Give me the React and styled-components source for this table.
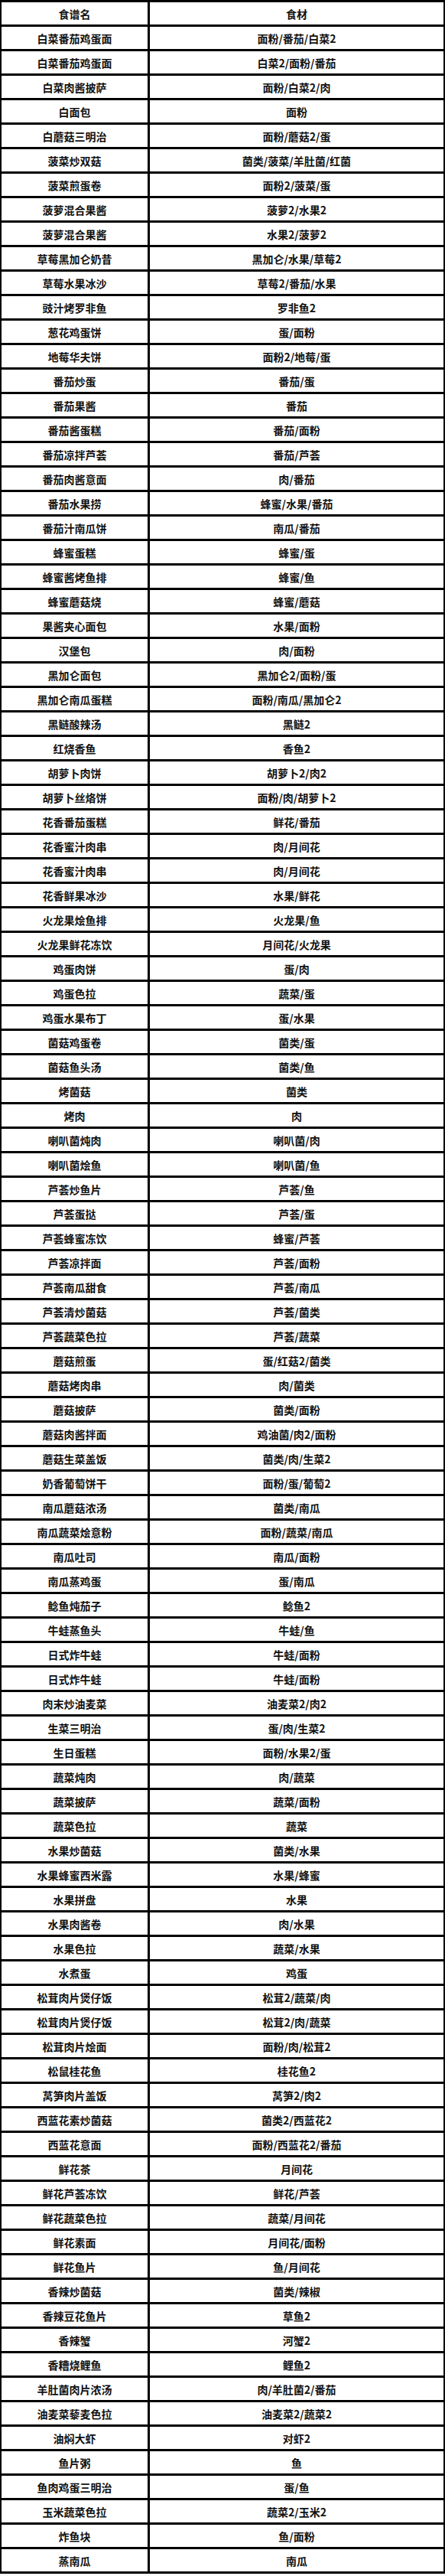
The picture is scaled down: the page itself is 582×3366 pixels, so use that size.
import React from "react";
import styled, { createGlobalStyle } from "styled-components";

const Global = createGlobalStyle`
  html, body { margin: 0; padding: 0; background: #ffffff; }
  body { font-family: "Noto Sans CJK SC", "Microsoft YaHei", sans-serif; }
`;

const rows = [
  ["白菜番茄鸡蛋面", "面粉/番茄/白菜2"],
  ["白菜番茄鸡蛋面", "白菜2/面粉/番茄"],
  ["白菜肉酱披萨", "面粉/白菜2/肉"],
  ["白面包", "面粉"],
  ["白蘑菇三明治", "面粉/蘑菇2/蛋"],
  ["菠菜炒双菇", "菌类/菠菜/羊肚菌/红菌"],
  ["菠菜煎蛋卷", "面粉2/菠菜/蛋"],
  ["菠萝混合果酱", "菠萝2/水果2"],
  ["菠萝混合果酱", "水果2/菠萝2"],
  ["草莓黑加仑奶昔", "黑加仑/水果/草莓2"],
  ["草莓水果冰沙", "草莓2/番茄/水果"],
  ["豉汁烤罗非鱼", "罗非鱼2"],
  ["葱花鸡蛋饼", "蛋/面粉"],
  ["地莓华夫饼", "面粉2/地莓/蛋"],
  ["番茄炒蛋", "番茄/蛋"],
  ["番茄果酱", "番茄"],
  ["番茄酱蛋糕", "番茄/面粉"],
  ["番茄凉拌芦荟", "番茄/芦荟"],
  ["番茄肉酱意面", "肉/番茄"],
  ["番茄水果捞", "蜂蜜/水果/番茄"],
  ["番茄汁南瓜饼", "南瓜/番茄"],
  ["蜂蜜蛋糕", "蜂蜜/蛋"],
  ["蜂蜜酱烤鱼排", "蜂蜜/鱼"],
  ["蜂蜜蘑菇烧", "蜂蜜/蘑菇"],
  ["果酱夹心面包", "水果/面粉"],
  ["汉堡包", "肉/面粉"],
  ["黑加仑面包", "黑加仑2/面粉/蛋"],
  ["黑加仑南瓜蛋糕", "面粉/南瓜/黑加仑2"],
  ["黑鲢酸辣汤", "黑鲢2"],
  ["红烧香鱼", "香鱼2"],
  ["胡萝卜肉饼", "胡萝卜2/肉2"],
  ["胡萝卜丝烙饼", "面粉/肉/胡萝卜2"],
  ["花香番茄蛋糕", "鲜花/番茄"],
  ["花香蜜汁肉串", "肉/月间花"],
  ["花香蜜汁肉串", "肉/月间花"],
  ["花香鲜果冰沙", "水果/鲜花"],
  ["火龙果烩鱼排", "火龙果/鱼"],
  ["火龙果鲜花冻饮", "月间花/火龙果"],
  ["鸡蛋肉饼", "蛋/肉"],
  ["鸡蛋色拉", "蔬菜/蛋"],
  ["鸡蛋水果布丁", "蛋/水果"],
  ["菌菇鸡蛋卷", "菌类/蛋"],
  ["菌菇鱼头汤", "菌类/鱼"],
  ["烤菌菇", "菌类"],
  ["烤肉", "肉"],
  ["喇叭菌炖肉", "喇叭菌/肉"],
  ["喇叭菌烩鱼", "喇叭菌/鱼"],
  ["芦荟炒鱼片", "芦荟/鱼"],
  ["芦荟蛋挞", "芦荟/蛋"],
  ["芦荟蜂蜜冻饮", "蜂蜜/芦荟"],
  ["芦荟凉拌面", "芦荟/面粉"],
  ["芦荟南瓜甜食", "芦荟/南瓜"],
  ["芦荟清炒菌菇", "芦荟/菌类"],
  ["芦荟蔬菜色拉", "芦荟/蔬菜"],
  ["蘑菇煎蛋", "蛋/红菇2/菌类"],
  ["蘑菇烤肉串", "肉/菌类"],
  ["蘑菇披萨", "菌类/面粉"],
  ["蘑菇肉酱拌面", "鸡油菌/肉2/面粉"],
  ["蘑菇生菜盖饭", "菌类/肉/生菜2"],
  ["奶香葡萄饼干", "面粉/蛋/葡萄2"],
  ["南瓜蘑菇浓汤", "菌类/南瓜"],
  ["南瓜蔬菜烩意粉", "面粉/蔬菜/南瓜"],
  ["南瓜吐司", "南瓜/面粉"],
  ["南瓜蒸鸡蛋", "蛋/南瓜"],
  ["鲶鱼炖茄子", "鲶鱼2"],
  ["牛蛙蒸鱼头", "牛蛙/鱼"],
  ["日式炸牛蛙", "牛蛙/面粉"],
  ["日式炸牛蛙", "牛蛙/面粉"],
  ["肉末炒油麦菜", "油麦菜2/肉2"],
  ["生菜三明治", "蛋/肉/生菜2"],
  ["生日蛋糕", "面粉/水果2/蛋"],
  ["蔬菜炖肉", "肉/蔬菜"],
  ["蔬菜披萨", "蔬菜/面粉"],
  ["蔬菜色拉", "蔬菜"],
  ["水果炒菌菇", "菌类/水果"],
  ["水果蜂蜜西米露", "水果/蜂蜜"],
  ["水果拼盘", "水果"],
  ["水果肉酱卷", "肉/水果"],
  ["水果色拉", "蔬菜/水果"],
  ["水煮蛋", "鸡蛋"],
  ["松茸肉片煲仔饭", "松茸2/蔬菜/肉"],
  ["松茸肉片煲仔饭", "松茸2/肉/蔬菜"],
  ["松茸肉片烩面", "面粉/肉/松茸2"],
  ["松鼠桂花鱼", "桂花鱼2"],
  ["莴笋肉片盖饭", "莴笋2/肉2"],
  ["西蓝花素炒菌菇", "菌类2/西蓝花2"],
  ["西蓝花意面", "面粉/西蓝花2/番茄"],
  ["鲜花茶", "月间花"],
  ["鲜花芦荟冻饮", "鲜花/芦荟"],
  ["鲜花蔬菜色拉", "蔬菜/月间花"],
  ["鲜花素面", "月间花/面粉"],
  ["鲜花鱼片", "鱼/月间花"],
  ["香辣炒菌菇", "菌类/辣椒"],
  ["香辣豆花鱼片", "草鱼2"],
  ["香辣蟹", "河蟹2"],
  ["香糟烧鲤鱼", "鲤鱼2"],
  ["羊肚菌肉片浓汤", "肉/羊肚菌2/番茄"],
  ["油麦菜藜麦色拉", "油麦菜2/蔬菜2"],
  ["油焖大虾", "对虾2"],
  ["鱼片粥", "鱼"],
  ["鱼肉鸡蛋三明治", "蛋/鱼"],
  ["玉米蔬菜色拉", "蔬菜2/玉米2"],
  ["炸鱼块", "鱼/面粉"],
  ["蒸南瓜", "南瓜"],
];

const Table = styled.div`
  display: grid;
  grid-template-columns: 191px 1fr;
  column-gap: 3px;
  row-gap: 3px;
  padding: 3px 2px 3px 2px;
  background: #000000;
  width: 582px;
  box-sizing: border-box;
`;

const Cell = styled.div`
  height: 29px;
  background: #ffffff;
  display: flex;
  align-items: center;
  justify-content: center;
  font-family: "Noto Sans CJK SC", sans-serif;
  font-weight: 700;
  font-size: 14px;
  color: #111111;
  white-space: nowrap;
  letter-spacing: ${(p) => (p.$head ? "0" : "0")};
`;

export default function App() {
  return (
    <>
      <Global />
      <Table>
        <Cell $head>食谱名</Cell>
        <Cell $head>食材</Cell>
        {rows.map(([name, ing], i) => (
          <React.Fragment key={i}>
            <Cell>{name}</Cell>
            <Cell>{ing}</Cell>
          </React.Fragment>
        ))}
      </Table>
    </>
  );
}
